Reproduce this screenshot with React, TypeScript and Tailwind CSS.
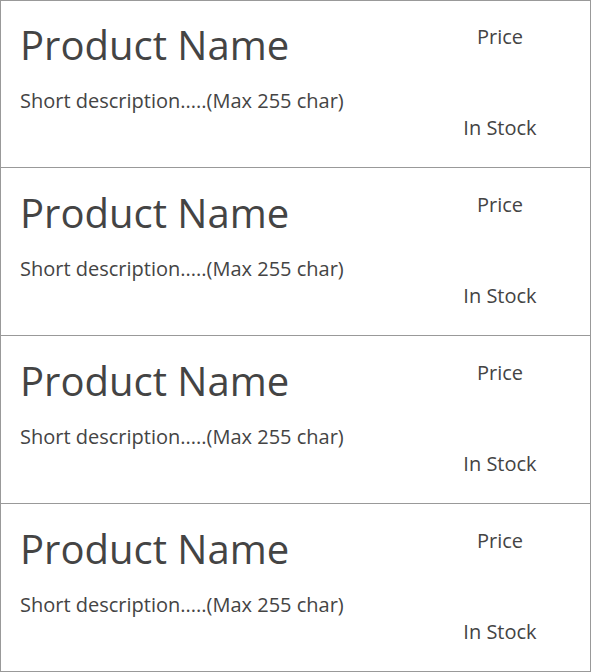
import React from 'react'

const products = [1, 2, 3, 4]

const ProductCard = () => {
  return (
    <div className="group flex h-[168px] border-x border-b border-[#999] first:border-t">
      {/* Name + description */}
      <div className="flex-1 pl-[19px] pt-[25px] group-first:pt-[24px]">
        <h2 className="text-[40px] leading-none text-[#444]">Product Name</h2>
        <p className="mt-[26px] text-[20px] leading-none text-[#444]">
          Short description.....(Max 255 char)
        </p>
      </div>

      {/* Price + stock */}
      <div className="mr-[10px] flex w-[160px] flex-col items-center pt-[27px] group-first:pt-[26px]">
        <span className="text-[20px] leading-none text-[#444]">Price</span>
        <span className="mt-[71px] text-[20px] leading-none text-[#444]">In Stock</span>
      </div>
    </div>
  )
}

const App = () => {
  return (
    <div className="w-[591px] bg-white font-['Open_Sans',sans-serif]">
      {products.map((p) => (
        <ProductCard key={p} />
      ))}
    </div>
  )
}

export default App
